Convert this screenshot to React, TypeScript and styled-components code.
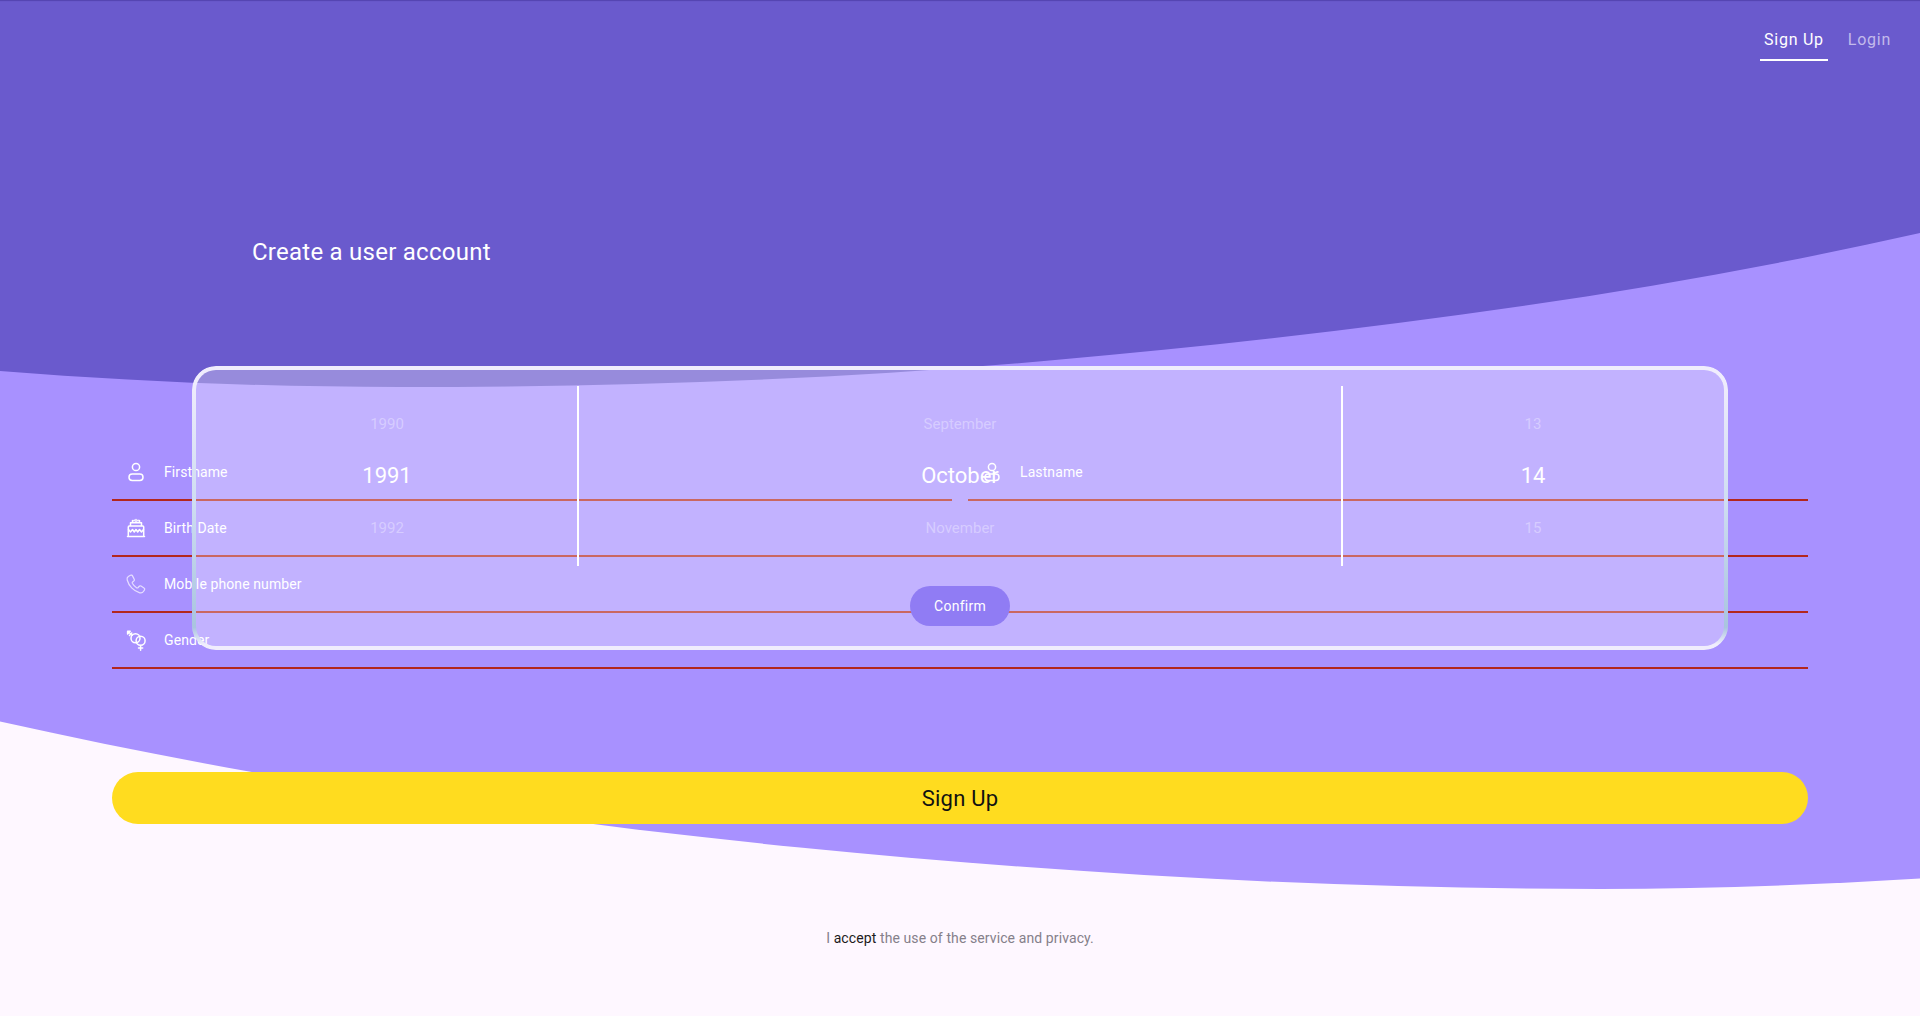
import React from "react";
import styled, { createGlobalStyle } from "styled-components";

const GlobalStyle = createGlobalStyle`
  *, *::before, *::after { box-sizing: border-box; }
  body {
    margin: 0;
    background: #fef7ff;
    font-family: Roboto, "Liberation Sans", sans-serif;
    font-size: 14px;
  }
  button, input { font: inherit; }
`;

const Page = styled.div`
  position: relative;
  display: flex;
  flex-direction: column;
  min-height: 100vh;
  color: #ffffff;
  box-shadow: inset 0 3px 1px -2px #5443b0;
`;

const Waves = styled.svg`
  position: absolute;
  inset: 0;
  z-index: -1;
  width: 100%;
  height: 100%;
`;

const TopBar = styled.nav`
  display: flex;
  justify-content: flex-end;
  gap: 16px;
  padding: 20px 25px 0;
`;

const NavLink = styled.a<{ $active?: boolean }>`
  padding: 9px 4px 0;
  height: 41px;
  border-bottom: 2px solid ${(p) => (p.$active ? "#ffffff" : "transparent")};
  color: ${(p) => (p.$active ? "#ffffff" : "#c3bbeb")};
  font-size: 16px;
  line-height: 22px;
  letter-spacing: 0.75px;
  text-decoration: none;
`;

const Title = styled.h1`
  margin: 173px 252px 0;
  font-size: 24px;
  font-weight: 400;
  line-height: 36px;
  letter-spacing: 0.25px;
`;

const FormArea = styled.form`
  display: flex;
  flex-direction: column;
  padding: 0 112px;
`;

const Stack = styled.div`
  display: grid;
  margin-top: 96px;
`;

const Fields = styled.div`
  grid-area: 1 / 1;
  display: grid;
  grid-template-columns: 1fr 1fr;
  column-gap: 16px;
  align-content: start;
  padding-top: 79px;
`;

const Field = styled.label<{ $wide?: boolean }>`
  display: flex;
  align-items: center;
  gap: 16px;
  grid-column: ${(p) => (p.$wide ? "1 / -1" : "auto")};
  height: 56px;
  padding-left: 12px;
  border-bottom: 2px solid #b3261e;
`;

const FieldIcon = styled.svg<{ $soft?: boolean }>`
  flex: none;
  width: 24px;
  height: 24px;
  fill: none;
  stroke: ${(p) => (p.$soft ? "#e6deff" : "#ffffff")};
  stroke-width: ${(p) => (p.$soft ? 1.2 : 1.5)};
  stroke-linecap: round;
  stroke-linejoin: round;
`;

const FieldInput = styled.input`
  flex: 1;
  min-width: 0;
  padding: 0;
  border: 0;
  outline: 0;
  background: transparent;
  color: #ffffff;
  line-height: 20px;
  letter-spacing: 0.1px;
  &::placeholder { color: #ffffff; opacity: 1; }
`;

const PickerPanel = styled.section`
  grid-area: 1 / 1;
  align-self: start;
  position: relative;
  display: flex;
  flex-direction: column;
  align-items: center;
  gap: 20px;
  margin: 0 80px;
  padding: 20px 4px 24px;
  border-radius: 24px;
  background: rgba(255, 255, 255, 0.3);
  &::before {
    content: "";
    position: absolute;
    inset: 0;
    padding: 4px;
    border-radius: 24px;
    background: linear-gradient(#f0edfd 4%, #cddcf1 50%, #a9c4df 92%, #f0edfd 98%);
    mask: linear-gradient(#000 0 0) content-box exclude, linear-gradient(#000 0 0);
    pointer-events: none;
  }
`;

const Wheels = styled.div`
  display: grid;
  grid-template-columns: 1fr 2fr 1fr;
  align-self: stretch;
`;

const Wheel = styled.div`
  display: flex;
  flex-direction: column;
  align-items: center;
  justify-content: center;
  height: 180px;
  & + & { box-shadow: -1px 0 #ffffff, inset 1px 0 #ffffff; }
`;

const WheelItem = styled.span<{ $selected?: boolean }>`
  height: 52px;
  line-height: 52px;
  font-size: ${(p) => (p.$selected ? 22 : 15)}px;
  color: ${(p) => (p.$selected ? "#ffffff" : "rgba(255, 255, 255, 0.35)")};
`;

const ConfirmButton = styled.button`
  width: 100px;
  height: 40px;
  border: 0;
  border-radius: 20px;
  background: #907cf4;
  color: #ffffff;
  letter-spacing: 0.25px;
`;

const SubmitButton = styled.button`
  height: 52px;
  margin-top: 103px;
  border: 0;
  border-radius: 26px;
  background: #ffdc1f;
  color: #111111;
  font-size: 22px;
  letter-spacing: 0.25px;
`;

const Terms = styled.p`
  margin: 104px 0 0;
  color: #85808a;
  line-height: 20px;
  letter-spacing: 0.1px;
  text-align: center;
`;

const TermsLink = styled.a`
  color: #1d1b20;
  text-decoration: none;
`;

const PersonIcon = () => (
  <FieldIcon viewBox="0 0 24 24">
    <circle cx="12" cy="7" r="3.600" />
    <rect x="5" y="14" width="14" height="6.500" rx="3.200" />
  </FieldIcon>
);

const CakeIcon = () => (
  <FieldIcon viewBox="0 0 24 24">
    <path d="M3.500 20.500h17M4.300 20.500V11c0-.6.400-1 1-1h13.400c.6 0 1 .4 1 1v9.500M6.500 10V6.800h11V10M8.500 6.500V4.500M12 6.500V3.500M15.500 6.500V4.500M10 4.800l.2-.6M13.800 4.800l.2-.6" />
    <path d="M4.500 13.500 6.500 16l2-2.500 1.800 2.500 1.700-2.500 1.700 2.500 1.800-2.500 2 2.500 2-2.500" />
  </FieldIcon>
);

const PhoneIcon = () => (
  <FieldIcon viewBox="0 0 24 24" $soft>
    <path d="M4.300 4.500 6.500 3.300c.7-.4 1.600-.1 2 .6l1.700 3.200c.4.700.2 1.500-.4 2L8.600 10c-.4.300-.5.800-.3 1.300a12 12 0 0 0 4.500 4.600c.5.200 1 .1 1.300-.3l.9-1.100c.5-.6 1.300-.8 2-.4l3 1.800c.7.400.9 1.300.5 2l-.9 1.400c-.8 1.300-2.300 1.900-3.800 1.500C9.500 19 4.700 13.600 3.200 8c-.4-1.400 0-2.700 1.100-3.500z" />
  </FieldIcon>
);

const GenderIcon = () => (
  <FieldIcon viewBox="0 0 24 24">
    <circle cx="11.500" cy="10.300" r="4.500" />
    <circle cx="16.600" cy="12.700" r="4.500" />
    <path d="M8.200 7.200 4.500 4M5.500 7.500 7.800 5M16.600 17.400v4.800M14.500 20h4.200" />
    <path fill="#ffffff" d="M3.600 3.300h2.600L3.600 5.900z" />
  </FieldIcon>
);

const wheels = [
  { name: "Year", items: ["1990", "1991", "1992"] },
  { name: "Month", items: ["September", "October", "November"] },
  { name: "Day", items: ["13", "14", "15"] },
];

export default function App() {
  return (
    <Page>
      <GlobalStyle />
      <Waves viewBox="0 0 1920 1016" preserveAspectRatio="none" aria-hidden="true">
        <path
          fill="#a891ff"
          d="M0 0H1920V878.5C1813 885 1707 889 1600 889C1333 889 1067 874 800 847.5C533 821 267 781 0 721.5Z"
        />
        <path
          fill="#6a5acd"
          d="M0 0H1920V233C1632 298 1343 334 1055 360C837 380 618 387 400 387C267 387 133 381.600 0 371Z"
        />
      </Waves>
      <TopBar>
        <NavLink href="#signup" $active>Sign Up</NavLink>
        <NavLink href="#login">Login</NavLink>
      </TopBar>
      <Title>Create a user account</Title>
      <FormArea onSubmit={(e) => e.preventDefault()}>
        <Stack>
          <Fields>
            <Field>
              <PersonIcon />
              <FieldInput aria-label="Firstname" placeholder="Firstname" />
            </Field>
            <Field>
              <PersonIcon />
              <FieldInput aria-label="Lastname" placeholder="Lastname" />
            </Field>
            <Field $wide>
              <CakeIcon />
              <FieldInput aria-label="Birth Date" placeholder="Birth Date" />
            </Field>
            <Field $wide>
              <PhoneIcon />
              <FieldInput type="tel" aria-label="Mobile phone number" placeholder="Mobile phone number" />
            </Field>
            <Field $wide>
              <GenderIcon />
              <FieldInput aria-label="Gender" placeholder="Gender" />
            </Field>
          </Fields>
          <PickerPanel aria-label="Birth date picker">
            <Wheels>
              {wheels.map((wheel) => (
                <Wheel key={wheel.name} role="listbox" aria-label={wheel.name}>
                  {wheel.items.map((item, i) => (
                    <WheelItem key={item} role="option" aria-selected={i === 1} $selected={i === 1}>
                      {item}
                    </WheelItem>
                  ))}
                </Wheel>
              ))}
            </Wheels>
            <ConfirmButton type="button">Confirm</ConfirmButton>
          </PickerPanel>
        </Stack>
        <SubmitButton type="submit">Sign Up</SubmitButton>
      </FormArea>
      <Terms>
        I <TermsLink href="#terms">accept</TermsLink> the use of the service and privacy.
      </Terms>
    </Page>
  );
}
